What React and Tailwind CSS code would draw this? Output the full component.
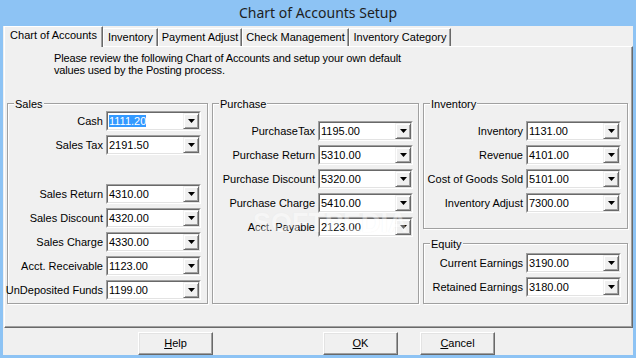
import React from "react";

function Arrow() {
  return (
    <svg width="7" height="4" viewBox="0 0 7 4" className="block">
      <polygon points="0,0 7,0 3.5,4" fill="#000" />
    </svg>
  );
}

function Combo({ value, selected }) {
  return (
    <div className="w-[95px] h-[20px] shrink-0 border border-t-[#a0a0a0] border-l-[#a0a0a0] border-b-white border-r-white">
      <div className="h-full flex items-center bg-white border border-t-[#696969] border-l-[#696969] border-b-[#e3e3e3] border-r-[#e3e3e3]">
        <div className="flex-1 pl-[1px] leading-[13px] whitespace-nowrap overflow-hidden">
          <span className={selected ? "bg-[#3399ff] text-white" : ""}>{value}</span>
        </div>
        <div className="w-[16px] h-full flex items-center justify-center bg-[#f0f0f0] border border-t-[#f0f0f0] border-l-[#f0f0f0] border-b-[#696969] border-r-[#696969] shadow-[inset_1px_1px_0_#fff,inset_-1px_-1px_0_#a0a0a0]">
          <Arrow />
        </div>
      </div>
    </div>
  );
}

function Row({ label, value, selected }) {
  return (
    <div className="flex items-center justify-end gap-[3px] h-[20px]">
      <span className="leading-[13px] whitespace-nowrap">{label}</span>
      <Combo value={value} selected={selected} />
    </div>
  );
}

function Group({ title, className, children }) {
  return (
    <div
      className={`relative flex flex-col gap-[4px] border border-[#a0a0a0] shadow-[inset_1px_1px_0_#fff,1px_1px_0_#fff] ${className}`}
    >
      <span className="absolute left-[6px] top-[-6px] px-[1px] bg-[#f0f0f0] leading-[13px]">
        {title}
      </span>
      {children}
    </div>
  );
}

function Button({ children }) {
  return (
    <div className="w-[75px] h-[23px] flex items-center justify-center bg-[#f0f0f0] border border-t-white border-l-white border-b-[#696969] border-r-[#696969] shadow-[inset_-1px_-1px_0_#a0a0a0,inset_1px_1px_0_#e3e3e3] leading-[13px]">
      {children}
    </div>
  );
}

export default function App() {
  return (
    <div className="w-[636px] h-[358px] flex flex-col bg-[#8dc3f4] text-[11px] text-black font-['Liberation_Sans',Arial,sans-serif] overflow-hidden">
      <div className="h-[26px] shrink-0 text-center leading-[26px] text-[14px] text-[#1e1e1e] font-['Noto_Sans',sans-serif]">
        Chart of Accounts Setup
      </div>
      <div className="mx-[3px] mb-[3px] flex-1 flex flex-col bg-[#f0f0f0]">
        {/* tab strip */}
        <div className="h-[20px] flex items-end pl-[1px] shrink-0">
          <div className="relative z-10 w-[99px] h-[21px] mb-[-1px] bg-[#f0f0f0] border-t border-l border-white border-r border-r-[#696969] shadow-[inset_-1px_0_0_#a0a0a0] pt-[2px] text-center leading-[13px]">
            Chart of Accounts
          </div>
          <div className="w-[55px] h-[18px] flex items-center justify-center leading-[13px] border-t border-l border-white border-r border-r-[#696969] shadow-[inset_-1px_0_0_#a0a0a0]">
            Inventory
          </div>
          <div className="w-[84px] h-[18px] flex items-center justify-center leading-[13px] border-t border-l border-white border-r border-r-[#696969] shadow-[inset_-1px_0_0_#a0a0a0]">
            Payment Adjust
          </div>
          <div className="w-[107px] h-[18px] flex items-center justify-center leading-[13px] border-t border-l border-white border-r border-r-[#696969] shadow-[inset_-1px_0_0_#a0a0a0]">
            Check Management
          </div>
          <div className="w-[102px] h-[18px] flex items-center justify-center leading-[13px] border-t border-l border-white border-r border-r-[#696969] shadow-[inset_-1px_0_0_#a0a0a0]">
            Inventory Category
          </div>
        </div>

        {/* tab page */}
        <div className="relative ml-[1px] h-[282px] shrink-0 border-t border-l border-white border-r border-b border-r-[#696969] border-b-[#696969] shadow-[inset_-1px_-1px_0_#a0a0a0] flex flex-col">
          <div className="pt-[5px] pl-[49px] leading-[12px] tracking-[-0.15px]">
            Please review the following Chart of Accounts and setup your own default
            <br />
            values used by the Posting process.
          </div>

          <div className="mt-[27px] pl-[2px] flex gap-[4px]">
            <Group title="Sales" className="w-[201px] h-[201px] pt-[7px] pr-[6px]">
              <Row label="Cash" value="1111.20" selected />
              <Row label="Sales Tax" value="2191.50" />
              <div className="h-[21px]" />
              <Row label="Sales Return" value="4310.00" />
              <Row label="Sales Discount" value="4320.00" />
              <Row label="Sales Charge" value="4330.00" />
              <Row label="Acct. Receivable" value="1123.00" />
              <Row label="UnDeposited Funds" value="1199.00" />
            </Group>

            <Group title="Purchase" className="w-[207px] h-[201px] pt-[17px] pr-[5px]">
              <Row label="PurchaseTax" value="1195.00" />
              <Row label="Purchase Return" value="5310.00" />
              <Row label="Purchase Discount" value="5320.00" />
              <Row label="Purchase Charge" value="5410.00" />
              <Row label="Acct. Payable" value="2123.00" />
            </Group>

            <div className="flex flex-col gap-[14px]">
              <Group title="Inventory" className="w-[205px] h-[126px] pt-[17px] pr-[6px]">
                <Row label="Inventory" value="1131.00" />
                <Row label="Revenue" value="4101.00" />
                <Row label="Cost of Goods Sold" value="5101.00" />
                <Row label="Inventory Adjust" value="7300.00" />
              </Group>
              <Group title="Equity" className="w-[205px] h-[61px] pt-[9px] pr-[6px]">
                <Row label="Current Earnings" value="3190.00" />
                <Row label="Retained Earnings" value="3180.00" />
              </Group>
            </div>
          </div>

          <div className="pointer-events-none absolute left-[248px] top-[163px] text-[27px] font-bold leading-none text-white opacity-40 [text-shadow:0_0_1px_#dddddd]">
            SOFTPEDIA
          </div>
        </div>

        {/* bottom buttons */}
        <div className="flex pt-[4px] pl-[135px]">
          <Button>
            <span><span className="underline">H</span>elp</span>
          </Button>
          <div className="ml-[110px]">
            <Button>
              <span><span className="underline">O</span>K</span>
            </Button>
          </div>
          <div className="ml-[22px]">
            <Button>
              <span><span className="underline">C</span>ancel</span>
            </Button>
          </div>
        </div>
      </div>
    </div>
  );
}
